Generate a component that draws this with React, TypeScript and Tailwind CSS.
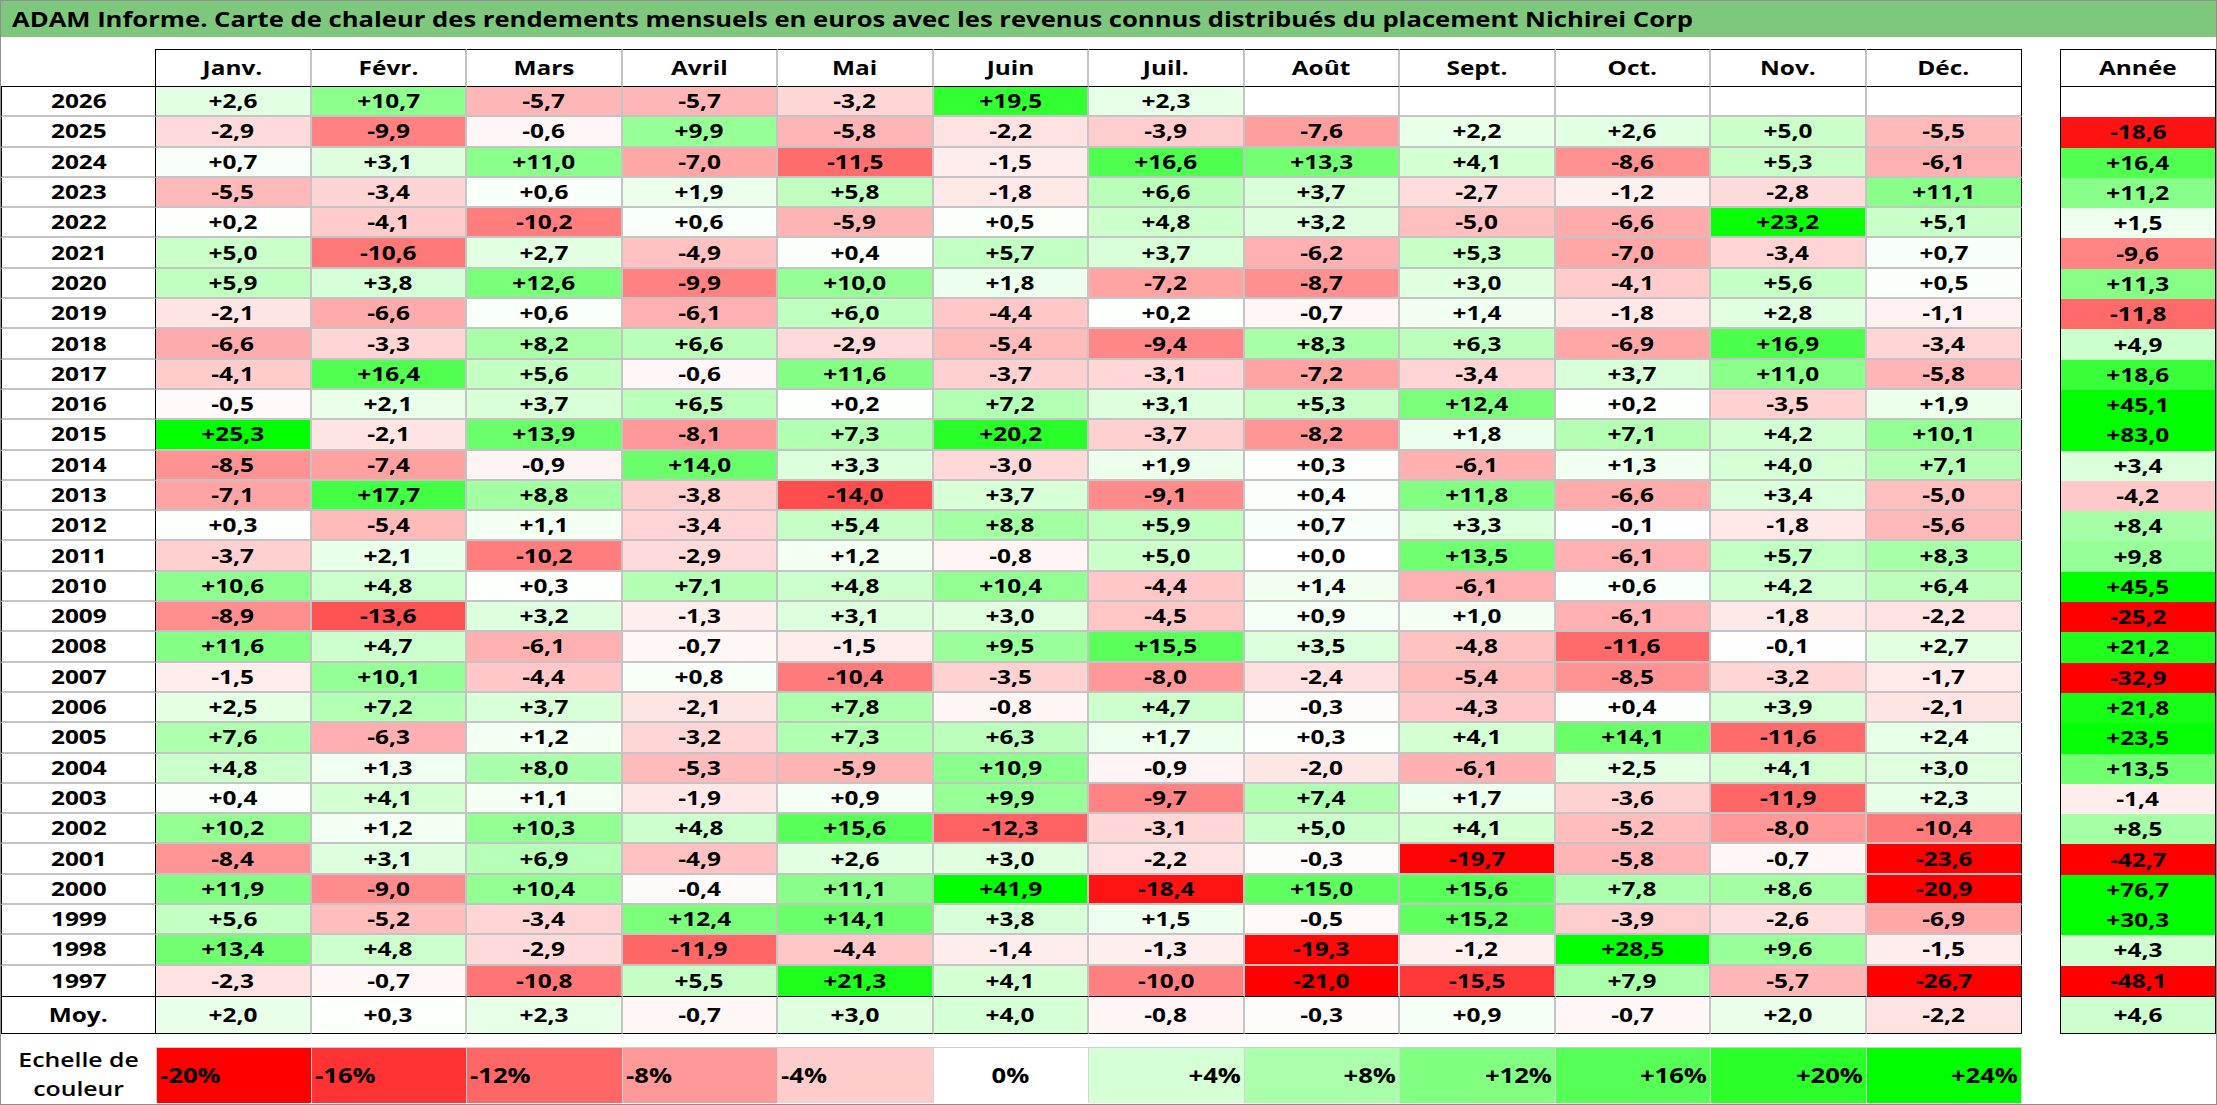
import React from "react";

type Row = [string, string[], string];

const E = "";
const ROWS: Row[] = [
  ["2026", ["+2,6", "+10,7", "-5,7", "-5,7", "-3,2", "+19,5", "+2,3", E, E, E, E, E], E],
  ["2025", ["-2,9", "-9,9", "-0,6", "+9,9", "-5,8", "-2,2", "-3,9", "-7,6", "+2,2", "+2,6", "+5,0", "-5,5"], "-18,6"],
  ["2024", ["+0,7", "+3,1", "+11,0", "-7,0", "-11,5", "-1,5", "+16,6", "+13,3", "+4,1", "-8,6", "+5,3", "-6,1"], "+16,4"],
  ["2023", ["-5,5", "-3,4", "+0,6", "+1,9", "+5,8", "-1,8", "+6,6", "+3,7", "-2,7", "-1,2", "-2,8", "+11,1"], "+11,2"],
  ["2022", ["+0,2", "-4,1", "-10,2", "+0,6", "-5,9", "+0,5", "+4,8", "+3,2", "-5,0", "-6,6", "+23,2", "+5,1"], "+1,5"],
  ["2021", ["+5,0", "-10,6", "+2,7", "-4,9", "+0,4", "+5,7", "+3,7", "-6,2", "+5,3", "-7,0", "-3,4", "+0,7"], "-9,6"],
  ["2020", ["+5,9", "+3,8", "+12,6", "-9,9", "+10,0", "+1,8", "-7,2", "-8,7", "+3,0", "-4,1", "+5,6", "+0,5"], "+11,3"],
  ["2019", ["-2,1", "-6,6", "+0,6", "-6,1", "+6,0", "-4,4", "+0,2", "-0,7", "+1,4", "-1,8", "+2,8", "-1,1"], "-11,8"],
  ["2018", ["-6,6", "-3,3", "+8,2", "+6,6", "-2,9", "-5,4", "-9,4", "+8,3", "+6,3", "-6,9", "+16,9", "-3,4"], "+4,9"],
  ["2017", ["-4,1", "+16,4", "+5,6", "-0,6", "+11,6", "-3,7", "-3,1", "-7,2", "-3,4", "+3,7", "+11,0", "-5,8"], "+18,6"],
  ["2016", ["-0,5", "+2,1", "+3,7", "+6,5", "+0,2", "+7,2", "+3,1", "+5,3", "+12,4", "+0,2", "-3,5", "+1,9"], "+45,1"],
  ["2015", ["+25,3", "-2,1", "+13,9", "-8,1", "+7,3", "+20,2", "-3,7", "-8,2", "+1,8", "+7,1", "+4,2", "+10,1"], "+83,0"],
  ["2014", ["-8,5", "-7,4", "-0,9", "+14,0", "+3,3", "-3,0", "+1,9", "+0,3", "-6,1", "+1,3", "+4,0", "+7,1"], "+3,4"],
  ["2013", ["-7,1", "+17,7", "+8,8", "-3,8", "-14,0", "+3,7", "-9,1", "+0,4", "+11,8", "-6,6", "+3,4", "-5,0"], "-4,2"],
  ["2012", ["+0,3", "-5,4", "+1,1", "-3,4", "+5,4", "+8,8", "+5,9", "+0,7", "+3,3", "-0,1", "-1,8", "-5,6"], "+8,4"],
  ["2011", ["-3,7", "+2,1", "-10,2", "-2,9", "+1,2", "-0,8", "+5,0", "+0,0", "+13,5", "-6,1", "+5,7", "+8,3"], "+9,8"],
  ["2010", ["+10,6", "+4,8", "+0,3", "+7,1", "+4,8", "+10,4", "-4,4", "+1,4", "-6,1", "+0,6", "+4,2", "+6,4"], "+45,5"],
  ["2009", ["-8,9", "-13,6", "+3,2", "-1,3", "+3,1", "+3,0", "-4,5", "+0,9", "+1,0", "-6,1", "-1,8", "-2,2"], "-25,2"],
  ["2008", ["+11,6", "+4,7", "-6,1", "-0,7", "-1,5", "+9,5", "+15,5", "+3,5", "-4,8", "-11,6", "-0,1", "+2,7"], "+21,2"],
  ["2007", ["-1,5", "+10,1", "-4,4", "+0,8", "-10,4", "-3,5", "-8,0", "-2,4", "-5,4", "-8,5", "-3,2", "-1,7"], "-32,9"],
  ["2006", ["+2,5", "+7,2", "+3,7", "-2,1", "+7,8", "-0,8", "+4,7", "-0,3", "-4,3", "+0,4", "+3,9", "-2,1"], "+21,8"],
  ["2005", ["+7,6", "-6,3", "+1,2", "-3,2", "+7,3", "+6,3", "+1,7", "+0,3", "+4,1", "+14,1", "-11,6", "+2,4"], "+23,5"],
  ["2004", ["+4,8", "+1,3", "+8,0", "-5,3", "-5,9", "+10,9", "-0,9", "-2,0", "-6,1", "+2,5", "+4,1", "+3,0"], "+13,5"],
  ["2003", ["+0,4", "+4,1", "+1,1", "-1,9", "+0,9", "+9,9", "-9,7", "+7,4", "+1,7", "-3,6", "-11,9", "+2,3"], "-1,4"],
  ["2002", ["+10,2", "+1,2", "+10,3", "+4,8", "+15,6", "-12,3", "-3,1", "+5,0", "+4,1", "-5,2", "-8,0", "-10,4"], "+8,5"],
  ["2001", ["-8,4", "+3,1", "+6,9", "-4,9", "+2,6", "+3,0", "-2,2", "-0,3", "-19,7", "-5,8", "-0,7", "-23,6"], "-42,7"],
  ["2000", ["+11,9", "-9,0", "+10,4", "-0,4", "+11,1", "+41,9", "-18,4", "+15,0", "+15,6", "+7,8", "+8,6", "-20,9"], "+76,7"],
  ["1999", ["+5,6", "-5,2", "-3,4", "+12,4", "+14,1", "+3,8", "+1,5", "-0,5", "+15,2", "-3,9", "-2,6", "-6,9"], "+30,3"],
  ["1998", ["+13,4", "+4,8", "-2,9", "-11,9", "-4,4", "-1,4", "-1,3", "-19,3", "-1,2", "+28,5", "+9,6", "-1,5"], "+4,3"],
  ["1997", ["-2,3", "-0,7", "-10,8", "+5,5", "+21,3", "+4,1", "-10,0", "-21,0", "-15,5", "+7,9", "-5,7", "-26,7"], "-48,1"],
];

const MOY: string[] = ["+2,0", "+0,3", "+2,3", "-0,7", "+3,0", "+4,0", "-0,8", "-0,3", "+0,9", "-0,7", "+2,0", "-2,2"];
const MOY_YEAR = "+4,6";

const MONTHS = ["Janv.", "Févr.", "Mars", "Avril", "Mai", "Juin", "Juil.", "Août", "Sept.", "Oct.", "Nov.", "Déc."];

const LEGEND = [-20, -16, -12, -8, -4, 0, 4, 8, 12, 16, 20, 24];

function colorFor(s: string): string {
  if (s === "") return "#ffffff";
  const v = parseFloat(s.replace(",", "."));
  if (v < 0) {
    const t = Math.min(1, -v / 20);
    const c = Math.round(255 * (1 - t));
    return `rgb(255,${c},${c})`;
  }
  const t = Math.min(1, v / 24);
  const c = Math.round(255 * (1 - t));
  return `rgb(${c},255,${c})`;
}

function colorForNum(v: number): string {
  return colorFor(String(v));
}

const GRID = "grid grid-cols-[155px_repeat(12,minmax(0,1fr))]";

const HEAD_MONTH = "border-t border-t-black border-b border-b-black border-r-2 border-r-[#c4c4c4]";
const HEAD_MONTH_LAST = "border-t border-t-black border-b border-b-black border-r border-r-black";

const BODY_MONTH = "border-r-2 border-r-[#c4c4c4] border-b-2 border-b-[#c4c4c4]";
const BODY_MONTH_LAST = "border-r border-r-black border-b-2 border-b-[#c4c4c4]";
const BODY_MONTH_NB = "border-r-2 border-r-[#c4c4c4]";
const BODY_MONTH_LAST_NB = "border-r border-r-black";

const BODY_YEAR = "border-l border-l-black border-r border-r-black border-b-2 border-b-[#c4c4c4]";
const BODY_YEAR_NB = "border-l border-l-black border-r border-r-black";

function T({ children }: { children: React.ReactNode }) {
  return <span className="inline-block scale-x-[1.22] leading-none">{children}</span>;
}

export default function App() {
  return (
    <div className="w-[2217px] h-[1105px] overflow-hidden bg-white border border-[#8f8f8f] font-['Open_Sans',sans-serif] text-black">
      <div className="h-[36px] bg-[#7ec87e] flex items-center pl-[11px]">
        <span className="inline-block origin-left scale-x-[1.22] text-[21px] font-bold leading-none whitespace-nowrap">
          ADAM Informe. Carte de chaleur des rendements mensuels en euros avec les revenus connus distribués du placement Nichirei Corp
        </span>
      </div>

      <div className="mt-[12px] flex">
        <div className="w-[2021px] flex flex-col">
          <div className={`${GRID} h-[38px] text-[20px] font-bold`}>
            <div className="border-r border-r-black border-b border-b-black" />
            {MONTHS.map((m, i) => (
              <div key={m} className={`flex items-center justify-center ${i === 11 ? HEAD_MONTH_LAST : HEAD_MONTH}`}>
                <T>{m}</T>
              </div>
            ))}
          </div>

          {ROWS.map(([year, vals], ri) => {
            const last = ri === ROWS.length - 1;
            return (
              <div key={year} className={`${GRID} h-[30.3px] text-[20px] font-bold`}>
                <div className={`flex items-center justify-center ${last ? BODY_YEAR_NB : BODY_YEAR}`}>
                  <T>{year}</T>
                </div>
                {vals.map((v, ci) => {
                  const cls = last
                    ? ci === 11
                      ? BODY_MONTH_LAST_NB
                      : BODY_MONTH_NB
                    : ci === 11
                      ? BODY_MONTH_LAST
                      : BODY_MONTH;
                  return (
                    <div
                      key={ci}
                      className={`flex items-center justify-center ${cls}`}
                      style={{ backgroundColor: colorFor(v) }}
                    >
                      <T>{v}</T>
                    </div>
                  );
                })}
              </div>
            );
          })}

          <div className={`${GRID} h-[38px] text-[20px] font-bold`}>
            <div className="flex items-center justify-center border border-black">
              <T>Moy.</T>
            </div>
            {MOY.map((v, ci) => (
              <div
                key={ci}
                className={`flex items-center justify-center ${ci === 11 ? HEAD_MONTH_LAST : HEAD_MONTH}`}
                style={{ backgroundColor: colorFor(v) }}
              >
                <T>{v}</T>
              </div>
            ))}
          </div>

          <div className={`${GRID} mt-[13px] h-[56px]`}>
            <div className="flex flex-col items-center justify-center gap-[9px] text-[20px] font-semibold">
              <span className="inline-block scale-x-[1.24] leading-none">Echelle de</span>
              <span className="inline-block scale-x-[1.24] leading-none">couleur</span>
            </div>
            {LEGEND.map((l, i) => {
              const label = l > 0 ? `+${l}%` : `${l}%`;
              const align =
                l < 0 ? "justify-start pl-[3px]" : l === 0 ? "justify-center" : "justify-end pr-[3px]";
              const originCls = l < 0 ? "origin-left" : l === 0 ? "origin-center" : "origin-right";
              return (
                <div
                  key={l}
                  className={`flex items-center ${align} border-t border-t-[#cfcfcf] border-r border-r-[#d4d4d4] ${i === 0 ? "border-l border-l-[#cfcfcf]" : ""}`}
                  style={{ backgroundColor: colorForNum(l) }}
                >
                  <span className={`inline-block ${originCls} scale-x-[1.22] text-[21px] font-bold leading-none`}>{label}</span>
                </div>
              );
            })}
          </div>
        </div>

        <div className="ml-[38px] w-[156px] flex flex-col text-[20px] font-bold">
          <div className="h-[38px] flex items-center justify-center border border-black">
            <T>Année</T>
          </div>
          {ROWS.map(([year, , an]) => (
            <div
              key={year}
              className="h-[30.3px] flex items-center justify-center border-x border-x-black"
              style={{ backgroundColor: colorFor(an) }}
            >
              <T>{an}</T>
            </div>
          ))}
          <div
            className="h-[38px] flex items-center justify-center border border-black"
            style={{ backgroundColor: colorFor(MOY_YEAR) }}
          >
            <T>{MOY_YEAR}</T>
          </div>
        </div>
      </div>
    </div>
  );
}
